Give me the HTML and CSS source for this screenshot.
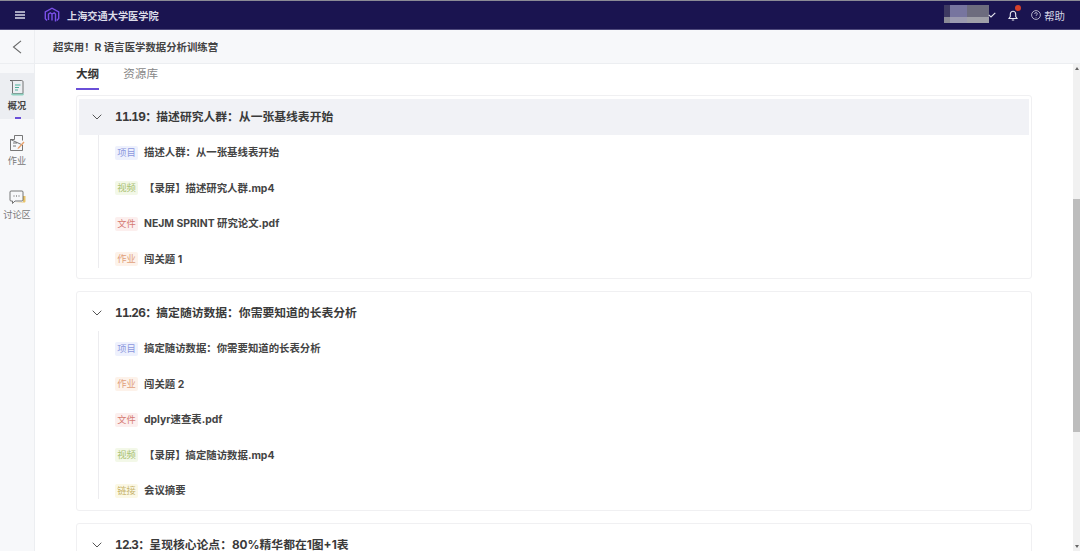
FILE: index.html
```html
<!DOCTYPE html>
<html lang="zh-CN">
<head>
<meta charset="utf-8">
<title>超实用！R 语言医学数据分析训练营</title>
<link rel="stylesheet" href="styles.css">
</head>
<body>
<div class="app">
  <header class="topbar">
    <svg class="menu-icon" width="10" height="8" viewBox="0 0 10 8"><path d="M0 1h10M0 4h10M0 7h10" stroke="#d8d8e8" stroke-width="1.3"/></svg>
    <svg class="logo" width="16" height="17" viewBox="0 0 16 17" fill="none"><path d="M3 13.500 1.300 11.800V5L8 1.200 14.700 5v6.500L12.800 13.500" stroke="#7a4fe8" stroke-width="1.400"/><path d="M4.500 13V7L6.300 5.800 8 7v6.500M8 7l2.200-1.200L11.500 7v7.500" stroke="#7a4fe8" stroke-width="1.400"/></svg>
    <span class="brand">上海交通大学医学院</span>
    <div class="top-right">
      <div class="mosaic"><i></i><i></i><i></i><i></i><i></i><i></i></div>
      <svg class="caret" width="8" height="6" viewBox="0 0 8 6" fill="none"><path d="M.7 2.800 3 5 7.300.8" stroke="#e4e4ee" stroke-width="1.100"/></svg>
      <span class="bell">
        <svg width="10" height="11" viewBox="0 0 10 11" fill="none"><path d="M1 8.500h8L7.700 6.600V4.200C7.700 2.600 6.500 1.300 5 1.300S2.300 2.600 2.300 4.200v2.400ZM3.800 10h2.400" stroke="#e8e8f0" stroke-width="1.100"/></svg>
        <b class="dot"></b>
      </span>
      <span class="help">
        <svg width="10" height="10" viewBox="0 0 10 10" fill="none"><circle cx="5" cy="5" r="4.400" stroke="#d5d5e4" stroke-width=".8"/><path d="M3.600 3.900C3.700 3 4.300 2.600 5 2.600c.8 0 1.400.5 1.400 1.200 0 1-1.400 1-1.400 2.100M5 7v.6" stroke="#d5d5e4" stroke-width=".8"/></svg>
        帮助
      </span>
    </div>
  </header>
  <div class="subbar">
    <div class="back">
      <svg width="10" height="14" viewBox="0 0 10 14" fill="none"><path d="M9 .8 1.500 7 9 13.200" stroke="#666" stroke-width="1.100"/></svg>
    </div>
    <div class="course">超实用！R 语言医学数据分析训练营</div>
  </div>
  <div class="body">
    <nav class="side">
      <div class="side-item active">
        <svg width="16" height="18" viewBox="0 0 16 18" fill="none"><path d="M1 1.500h11.500c1 0 1.500.5 1.500 1.500v11.500H3.500V3C3.500 2 2.500 1.500 1 1.500Z" stroke="#555" stroke-width=".8"/><path d="M6 6h5.500M6 8.500h4M6 11h3" stroke="#4caf9a" stroke-width="1"/><path d="M2 14.500h13c0 1.200-.6 2-1.500 2H4c-1.200 0-2-.8-2-2Z" fill="#8fd0c0"/></svg>
        <span>概况</span>
        <b class="active-mark"></b>
      </div>
      <div class="side-item">
        <svg width="16" height="18" viewBox="0 0 16 18" fill="none"><path d="M5.500 1.500h8v5M13.500 11v5.500h-12V5.500Z" stroke="#555" stroke-width=".8"/><path d="M5.500 1.500v4h-4M4 9h4M4 12h3" stroke="#555" stroke-width=".8"/><path d="m9 13.500 5.500-6 1 1-5.500 6-1.500.5Z" fill="#e8a06a"/></svg>
        <span>作业</span>
      </div>
      <div class="side-item">
        <svg width="17" height="16" viewBox="0 0 17 16" fill="none"><path d="M6 12.500h9.500c.5 0 1-.5 1-1V6H14v6Z" fill="#e9c46a"/><path d="M2 1h11c.6 0 1 .4 1 1v8c0 .6-.4 1-1 1H6l-2.500 2.500V11H2c-.6 0-1-.4-1-1V2c0-.6.4-1 1-1Z" stroke="#555" stroke-width=".8"/><path d="M4.500 6h1M7 6h1M9.500 6h1" stroke="#555" stroke-width="1"/></svg>
        <span>讨论区</span>
      </div>
    </nav>
    <main class="content">
      <div class="tabs">
        <span class="tab current">大纲</span>
        <span class="tab">资源库</span>
      </div>
      <section class="card">
        <div class="card-head hl">
          <svg class="chev" width="10" height="6" viewBox="0 0 10 6" fill="none"><path d="M.7.700 5 5 9.300.7" stroke="#555" stroke-width="1"/></svg>
          <h2><span class="date">11.19：</span>描述研究人群：从一张基线表开始</h2>
        </div>
        <ul class="rows">
          <li><span class="tag blue">项目</span><span class="label">描述人群：从一张基线表开始</span></li>
          <li><span class="tag green">视频</span><span class="label">【录屏】描述研究人群.mp4</span></li>
          <li><span class="tag red">文件</span><span class="label">NEJM SPRINT 研究论文.pdf</span></li>
          <li><span class="tag orange">作业</span><span class="label">闯关题 1</span></li>
        </ul>
      </section>
      <section class="card">
        <div class="card-head">
          <svg class="chev" width="10" height="6" viewBox="0 0 10 6" fill="none"><path d="M.7.700 5 5 9.300.7" stroke="#555" stroke-width="1"/></svg>
          <h2><span class="date">11.26：</span>搞定随访数据：你需要知道的长表分析</h2>
        </div>
        <ul class="rows">
          <li><span class="tag blue">项目</span><span class="label">搞定随访数据：你需要知道的长表分析</span></li>
          <li><span class="tag orange">作业</span><span class="label">闯关题 2</span></li>
          <li><span class="tag red">文件</span><span class="label">dplyr速查表.pdf</span></li>
          <li><span class="tag green">视频</span><span class="label">【录屏】搞定随访数据.mp4</span></li>
          <li><span class="tag yellow">链接</span><span class="label">会议摘要</span></li>
        </ul>
      </section>
      <section class="card">
        <div class="card-head">
          <svg class="chev" width="10" height="6" viewBox="0 0 10 6" fill="none"><path d="M.7.700 5 5 9.300.7" stroke="#555" stroke-width="1"/></svg>
          <h2><span class="date">12.3：</span>呈现核心论点：80%精华都在1图+1表</h2>
        </div>
      </section>
    </main>
    <div class="scrollbar"><b class="arrow up"></b><b class="thumb"></b><b class="arrow down"></b></div>
  </div>
</div>
</body>
</html>
```
FILE: styles.css
```css
* { box-sizing: border-box; }
html, body { margin: 0; height: 100%; overflow: hidden; }
body { font-family: Inter, "Noto Sans CJK SC", sans-serif; background: #fff; color: #333; }
.app { display: flex; flex-direction: column; height: 551px; overflow: hidden; }

.topbar { flex: none; height: 30px; background: #1a1450; border-top: 1px solid #8b8b95; border-bottom: 1px solid #4f4a7c; display: flex; align-items: center; padding-left: 15px; color: #e0e0ea; }
.menu-icon { margin-right: 19px; }
.logo { margin-right: 7px; }
.brand { font-size: 10.2px; font-weight: 700; color: #dcdce8; }
.top-right { margin-left: auto; display: flex; align-items: center; padding-right: 15px; }
.mosaic { width: 45px; height: 18px; margin-top: -2px; display: grid; grid-template-columns: 6px 17px 22px; grid-template-rows: 12px 6px; }
.mosaic i:nth-child(1) { background: #3e3a62; }
.mosaic i:nth-child(2) { background: #77759f; }
.mosaic i:nth-child(3) { background: #6d6c7e; }
.mosaic i:nth-child(4) { background: #8a8a96; }
.mosaic i:nth-child(5) { background: #9b9ab0; }
.mosaic i:nth-child(6) { background: #a0a0a8; }
.caret { margin-left: -1px; }
.bell { position: relative; display: flex; margin-left: 12px; }
.dot { position: absolute; top: -5px; right: -3px; width: 6px; height: 6px; border-radius: 50%; background: #d5402b; }
.help { display: flex; align-items: center; gap: 3px; margin-left: 13px; font-size: 10.4px; color: #d5d5e4; }

.subbar { flex: none; height: 34px; background: #f7f8fa; border-bottom: 1px solid #eceef1; display: flex; align-items: center; }
.back { width: 35px; height: 100%; display: flex; align-items: center; justify-content: center; border-right: 1px solid #eceef1; }
.course { margin-left: 18px; font-size: 10.4px; font-weight: 700; color: #444; }

.body { flex: 1; display: flex; min-height: 0; }
.side { flex: none; width: 35px; background: #f7f8fa; border-right: 1px solid #eceef1; padding-top: 9px; display: flex; flex-direction: column; }
.side-item { position: relative; height: 46px; display: flex; flex-direction: column; align-items: center; padding-top: 5.5px; margin-bottom: 9.5px; font-size: 9.2px; color: #777; }
.side-item svg { flex: none; }
.side-item span { margin-top: 2px; line-height: 14px; white-space: nowrap; }
.side-item.active { background: #eceef2; color: #444; font-weight: 700; }
.active-mark { position: absolute; bottom: 0; left: 15px; width: 6px; height: 2px; background: #6a4fd8; }

.content { flex: 1; min-width: 0; padding: 0 41px; overflow: hidden; }
.tabs { display: flex; gap: 24px; height: 31px; padding-top: 2px; }
.tab { height: 24px; line-height: 16px; font-size: 11.6px; color: #888; }
.tab.current { color: #333; font-weight: 700; border-bottom: 2px solid #6a4fd8; }

.card { border: 1px solid #f0f0f2; border-radius: 3px; padding: 3px 2px 0; margin-bottom: 12px; }
.card-head { height: 36px; display: flex; align-items: center; padding-left: 13px; }
.card-head.hl { background: #f1f2f6; }
.chev { margin-right: 13px; }
.card h2 { margin: 0; padding-bottom: 3px; font-size: 11.8px; font-weight: 700; color: #3a3a3a; }
.date { font-variant-numeric: tabular-nums; letter-spacing: -0.7px; }
.rows { list-style: none; display: flex; flex-direction: column; gap: 17.5px; margin: 0 0 10.5px 18.5px; padding: 8px 0 0 16.5px; border-left: 1px solid #ececef; }
.rows li { height: 18px; display: flex; align-items: center; }
.tag { flex: none; width: 23px; height: 14px; margin: 1px 6px 0 0; border-radius: 2px; font-size: 9.3px; line-height: 14px; text-align: center; }
.blue { background: #eef1fd; color: #8c98de; }
.green { background: #f3f8e8; color: #a8c070; }
.red { background: #fcefee; color: #d57a72; }
.orange { background: #fdf2ea; color: #e0a07a; }
.yellow { background: #fbf8e6; color: #c8b46c; }
.label { padding-bottom: 1px; font-size: 10.4px; font-weight: 700; color: #444; }

.scrollbar { flex: none; width: 7px; background: #f1f1f1; display: flex; flex-direction: column; align-items: center; }
.thumb { flex: none; width: 7px; height: 233px; margin-top: 125px; background: #bdbdbd; }
.arrow { flex: none; width: 0; height: 0; border-left: 2px solid transparent; border-right: 2px solid transparent; }
.arrow.up { margin-top: 3px; border-bottom: 3px solid #666; margin-bottom: 4px; }
.arrow.down { margin-top: auto; margin-bottom: 3px; border-top: 3px solid #666; }
```
